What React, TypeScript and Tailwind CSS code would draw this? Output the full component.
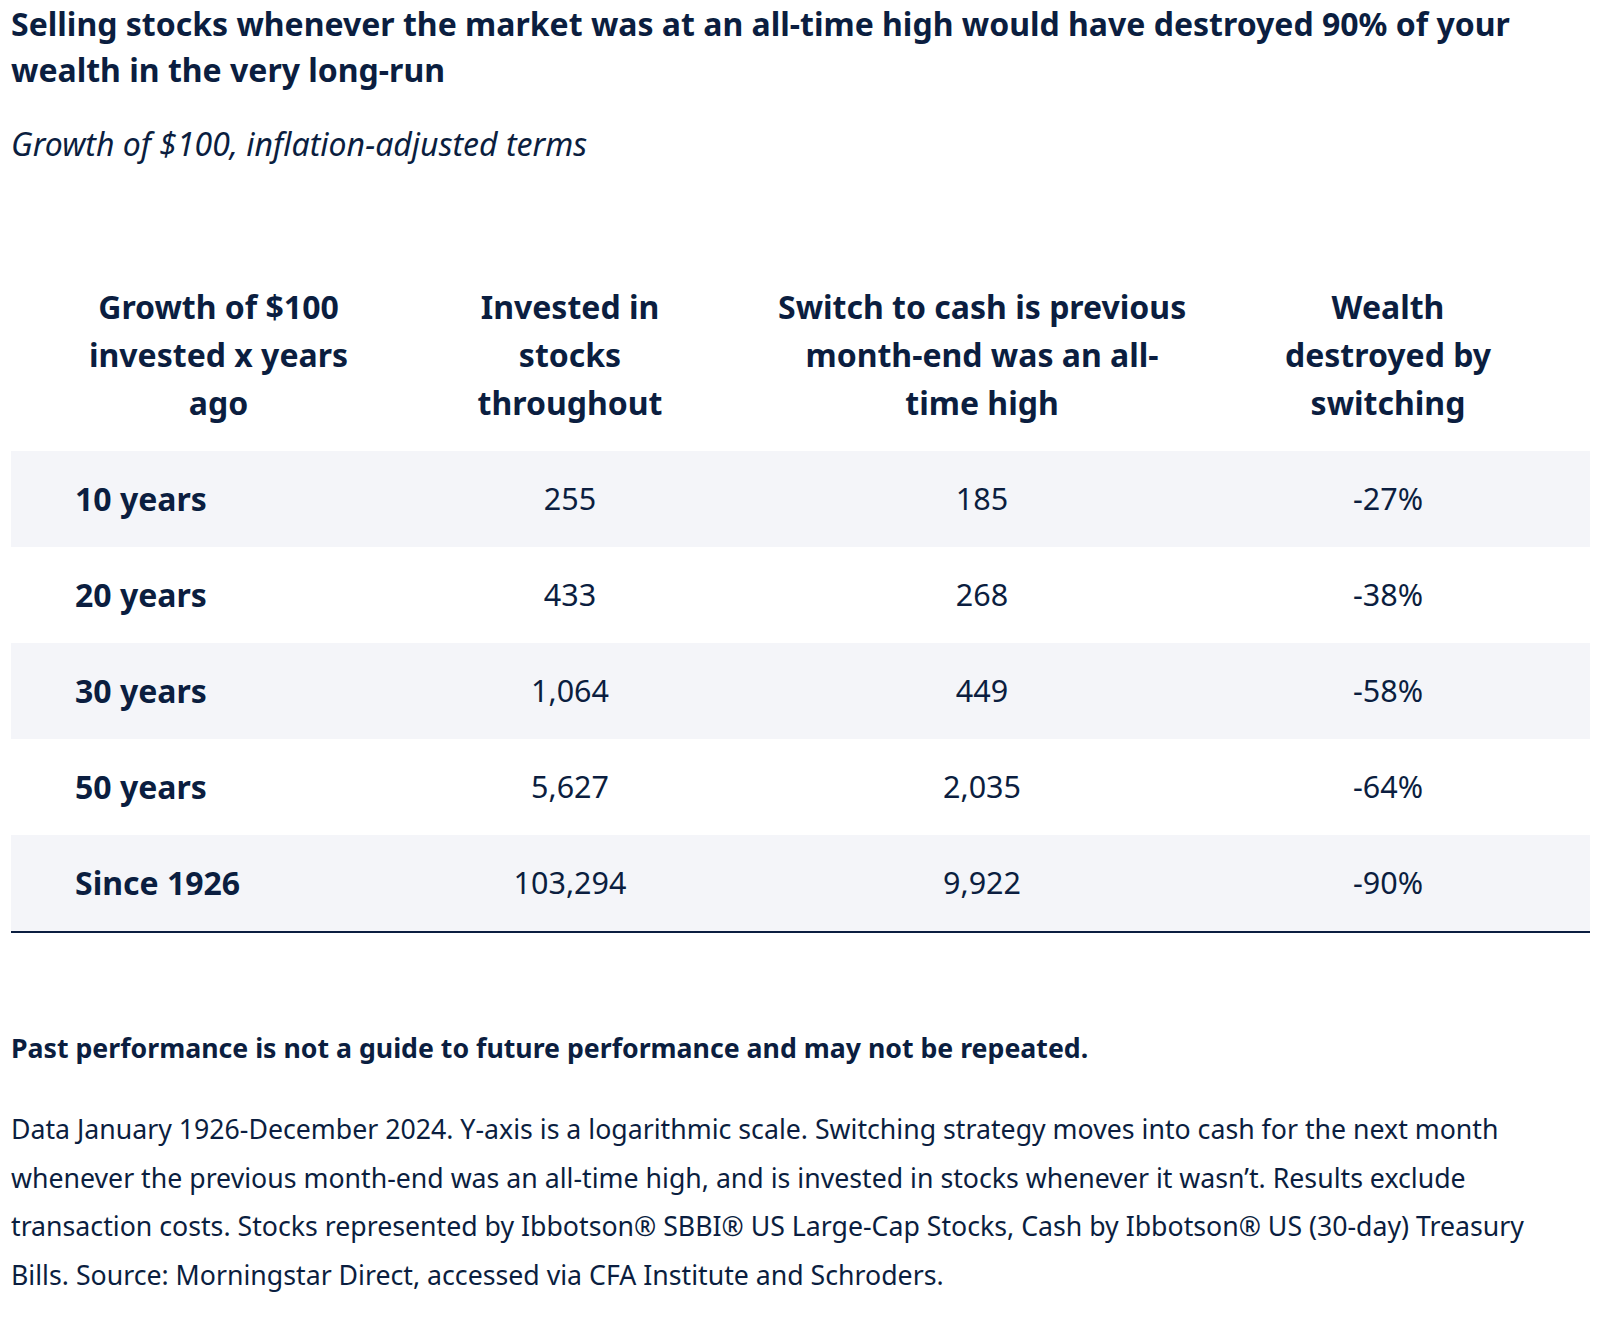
import React from "react";

const rows = [
  { label: "10 years", stocks: "255", cash: "185", lost: "-27%" },
  { label: "20 years", stocks: "433", cash: "268", lost: "-38%" },
  { label: "30 years", stocks: "1,064", cash: "449", lost: "-58%" },
  { label: "50 years", stocks: "5,627", cash: "2,035", lost: "-64%" },
  { label: "Since 1926", stocks: "103,294", cash: "9,922", lost: "-90%" },
];

const App = () => {
  return (
    <div className="min-h-[1322px] w-[1604px] bg-white pl-[11px] text-[#0b1e40] font-['Noto_Sans',sans-serif]">
      {/* ===== Heading ===== */}
      <h1 className="pt-[1px] text-[32px] leading-[46px] font-bold">
        Selling stocks whenever the market was at an all-time high would have destroyed 90% of your
        <br />
        wealth in the very long-run
      </h1>
      <p className="mt-[28px] text-[32px] leading-[46px] italic">
        Growth of $100, inflation-adjusted terms
      </p>

      {/* ===== Table ===== */}
      <div className="mt-[116px] w-[1579px]">
        <div className="grid grid-cols-[351px_416px_408px_404px] pb-[24px] text-[32px] leading-[48px] font-bold text-center whitespace-nowrap">
          <div className="pl-[64px]">
            Growth of $100
            <br />
            invested x years
            <br />
            ago
          </div>
          <div>
            Invested in
            <br />
            stocks
            <br />
            throughout
          </div>
          <div>
            Switch to cash is previous
            <br />
            month-end was an all-
            <br />
            time high
          </div>
          <div>
            Wealth
            <br />
            destroyed by
            <br />
            switching
          </div>
        </div>

        {rows.map((r, i) => (
          <div
            key={r.label}
            className={`grid h-[96px] grid-cols-[351px_416px_408px_404px] items-center text-[30.5px] ${
              i % 2 === 0 ? "bg-[#f4f5f9]" : "bg-white"
            }`}
          >
            <div className="pl-[64px] text-[32px] font-bold">{r.label}</div>
            <div className="text-center">{r.stocks}</div>
            <div className="text-center">{r.cash}</div>
            <div className="text-center">{r.lost}</div>
          </div>
        ))}
        <div className="h-[2px] bg-[#0b1e40]" />
      </div>

      {/* ===== Notes ===== */}
      <p className="mt-[91px] text-[26.7px] leading-[48px] font-bold">
        Past performance is not a guide to future performance and may not be repeated.
      </p>
      <p className="mt-[33px] w-[1570px] text-[26.7px] leading-[48.5px] whitespace-nowrap">
        Data January 1926-December 2024. Y-axis is a logarithmic scale. Switching strategy moves into cash for the next month
        <br />
        whenever the previous month-end was an all-time high, and is invested in stocks whenever it wasn’t. Results exclude
        <br />
        transaction costs. Stocks represented by Ibbotson® SBBI® US Large-Cap Stocks, Cash by Ibbotson® US (30-day) Treasury
        <br />
        Bills. Source: Morningstar Direct, accessed via CFA Institute and Schroders.
      </p>
    </div>
  );
};

export default App;
